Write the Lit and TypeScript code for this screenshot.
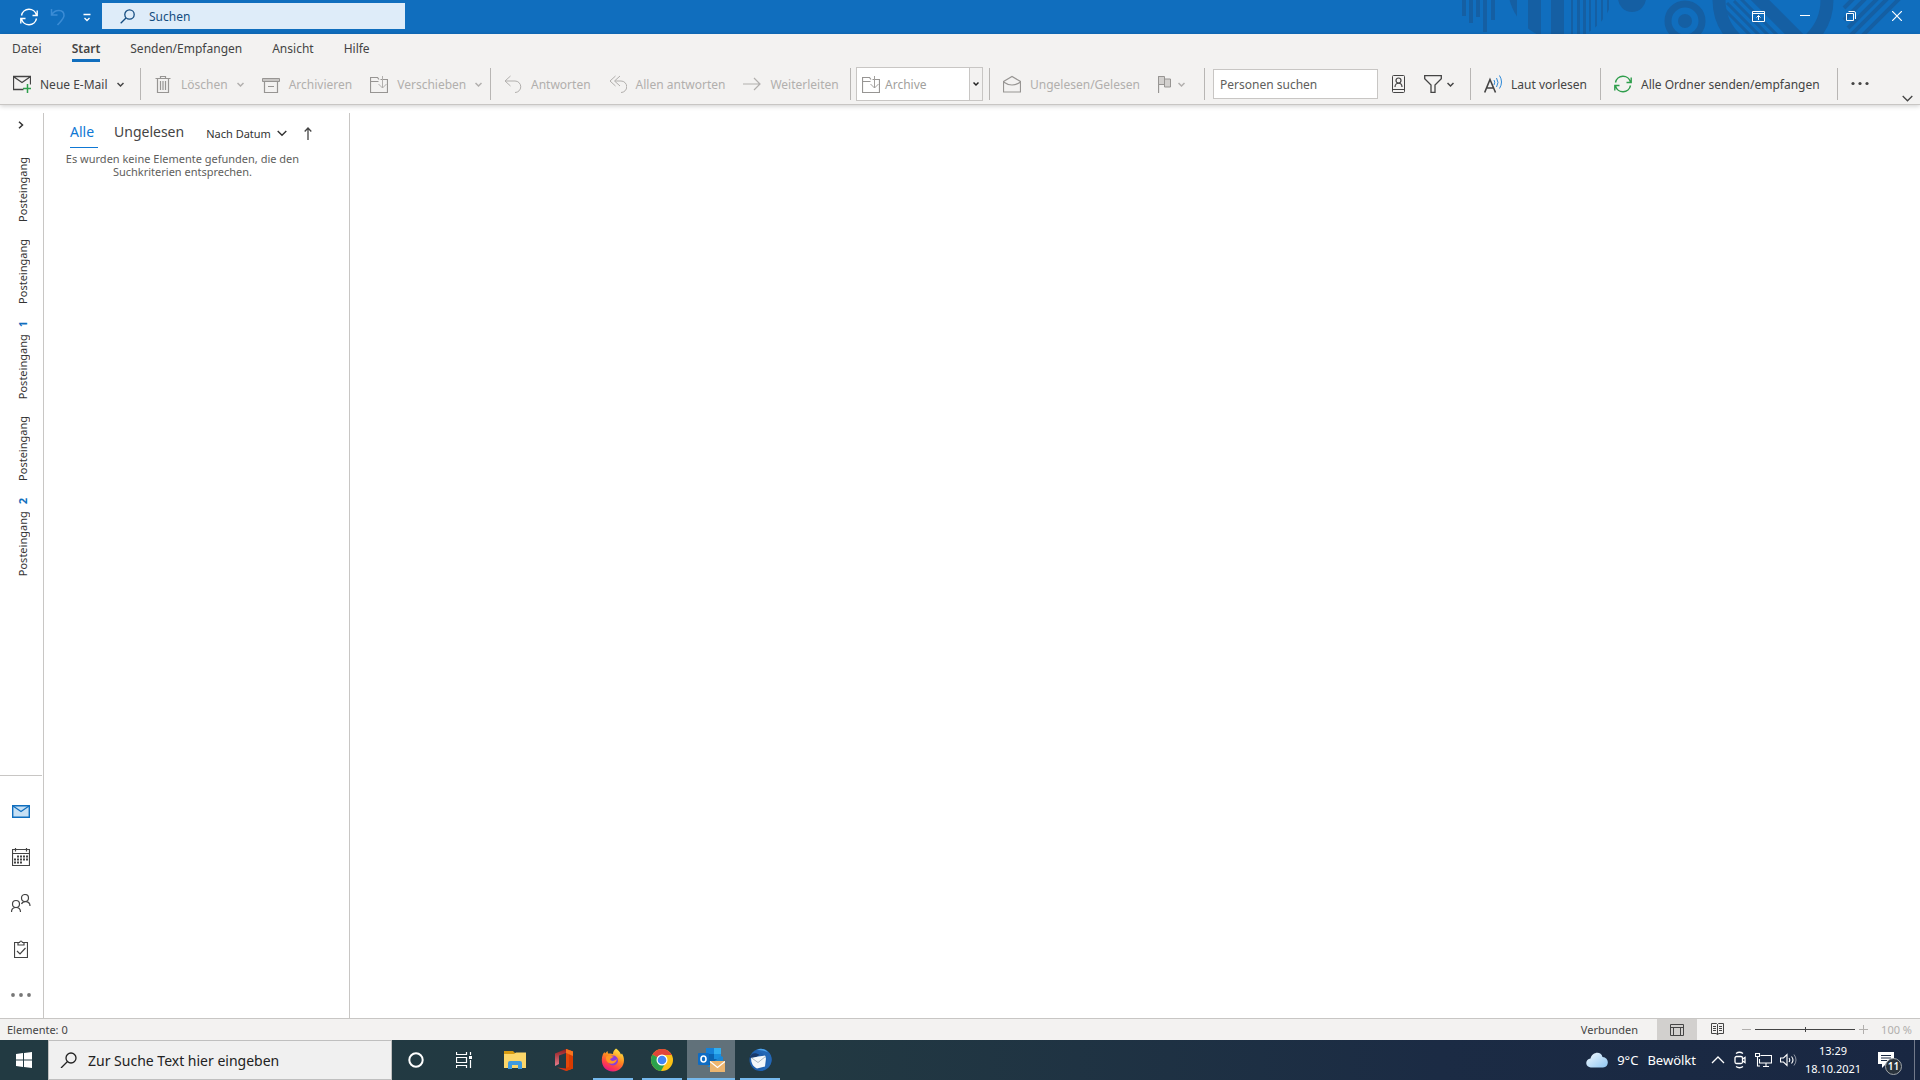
import { LitElement, html, css, svg, nothing, TemplateResult } from "lit";
import { customElement } from "lit/decorators.js";

type Art = ReturnType<typeof svg>;

const icon = (w: number, h: number, body: Art, cls = "") => html`<svg
  class="icon ${cls}" width=${w} height=${h} viewBox="0 0 ${w} ${h}" fill="none"
  stroke="currentColor" stroke-width="1" aria-hidden="true">${body}</svg>`;

const caret = () => icon(7, 18, svg`<path d="M0.5 8l3 3 3-3" stroke-width="1.5"/>`);

const syncArt = svg`<path d="M1.5 7.5A7.7 7.7 0 0 1 16.5 7M16.5 10.500A7.700 7.700 0 0 1 1.500 11M17.200 2.500V7.500H12.500M.8 15.500V10.500H5.500" stroke-width="1.400"/>`;
const art = {
  undo: svg`<path d="M1.500 1v6h6M2 6.500C5 1 14 1 14 7.500c0 3-2.500 5-6.500 9.500" stroke-width="1.500"/>`,
  lens: svg`<circle cx="9.500" cy="5.500" r="4.700" stroke-width="1.300"/><path d="M6 9L.7 14.300" stroke-width="1.300"/>`,
  newMail: svg`<path d="M10.500 14.500H.5v-13h17v8M1 2l8 5.500L17 2" stroke-width="1.300"/><path d="M14.500 9v9M10 13.500h9" stroke="#2fa04d" stroke-width="1.500"/>`,
  trash: svg`<path d="M1.500 3.500h15M3.500 3.500v14h11v-14M6.500 3V1.500h5V3M6.500 6v9M9 6v9M11.500 6v9" stroke-width="1.200" stroke="#979593"/>`,
  archive: svg`<g stroke="#979593"><path d="M.5 3.500h17v3H.5z" fill="#c8c6c4"/><path d="M2.500 6.500v11h13v-11M6 11.500h6" stroke-width="1.200"/></g>`,
  move: svg`<path d="M10.500 4.500H17.500V17.500H.5V2.500H7.500L9 4.500M.5 6.500H8.500" stroke="#979593" stroke-width="1.200"/><path d="M12.500 1V13M8.500 9l4 4 4-4"/>`,
  reply: svg`<path d="M6.500 1L1 6l5.500 5M1 6h10a5.500 5.500 0 0 1 0 11.500"/>`,
  replyAll: svg`<path d="M6.500 1L1 6l5.500 5M11 1L5.500 6l5.500 5M6 6h6a5.500 5.500 0 0 1 0 11.500"/>`,
  forward: svg`<path d="M0 9h17M11 3l6 6-6 6" stroke-width="1.200"/>`,
  openMail: svg`<path d="M.5 6.500L9 1.500l8.500 5v10.500H.5zM.5 7q8.500 6 17 0" stroke-width="1.200" stroke="#979593"/>`,
  flag: svg`<g stroke="#979593"><path d="M.5 1v17" stroke-width="1.300"/><path d="M.5 1.500h6v8h-6zM6.500 4h6v8h-6z" fill="#d2d0ce"/></g>`,
  contact: svg`<rect x=".5" y=".5" width="12" height="17" rx="1"/><path d="M.5 14.500h12M3 12c0-5 7-5 7 0" stroke-width="1.200"/><circle cx="6.500" cy="5.500" r="2.500" stroke-width="1.200"/>`,
  filter: svg`<path d="M.7.700h16.600v3L11 10v7.500H7V10L.7 3.700z" stroke-width="1.300"/>`,
  readAloud: svg`<path d="M.7 17.500L6 4.500l5.500 13M2.500 13h7" stroke-width="1.600"/><g stroke="#2b88d8"><path d="M10 5q1.500 2 0 5M12.500 3q3 4.500 0 9M15.500.500q4 6.500 0 13"/></g>`,
  sync: syncArt,
};

interface Command { label: string; art: Art; disabled?: boolean; menu?: boolean; }

const editing: Command[] = [
  { label: "Löschen", art: art.trash, disabled: true, menu: true },
  { label: "Archivieren", art: art.archive, disabled: true },
  { label: "Verschieben", art: art.move, disabled: true, menu: true },
];
const replying: Command[] = [
  { label: "Antworten", art: art.reply, disabled: true },
  { label: "Allen antworten", art: art.replyAll, disabled: true },
  { label: "Weiterleiten", art: art.forward, disabled: true },
];

@customElement("title-bar")
class TitleBar extends LitElement {
  static styles = css`
    :host { display: flex; height: 34px; background: #106ebe; color: #fff; position: relative; }
    .backdrop { position: absolute; right: 0; top: 0; }
    .quick { display: flex; align-items: center; width: 102px; box-sizing: border-box; padding-left: 20px; gap: 12px; }
    button { border: 0; background: none; color: inherit; padding: 0; display: flex; align-items: center; justify-content: center; }
    .dim { color: #3b8cd5; }
    .search { display: flex; align-items: center; gap: 14px; width: 303px; height: 26px; margin-top: 3px; padding-left: 18px; box-sizing: border-box; background: #deecf9; color: #144c80; }
    input { border: 0; background: none; outline: 0; font: 12px "Noto Sans", "Open Sans", sans-serif; color: inherit; padding: 0; flex: 1; min-width: 0; }
    input::placeholder { color: #144c80; opacity: 1; }
    .window { margin-left: auto; display: flex; position: relative; }
    .window button { width: 46px; height: 32px; }
  `;
  render() {
    return html`
      <svg class="backdrop" width="480" height="34" viewBox="0 0 480 34" fill="#155fa3" aria-hidden="true">
        <defs>
          <clipPath id="disc"><circle cx="121" cy="-13" r="53"/></clipPath>
          <clipPath id="hole"><circle cx="333" cy="0" r="48"/></clipPath>
        </defs>
        <path d="M22 0h4v16h-4zM29 0h4v23h-4zM36 0h4v17h-4zM43 0h4v32h-4zM51 0h4v20h-4z"/>
        <g clip-path="url(#disc)"><path d="M68 0h9v34h-9zM88 0h13v34H88zM111 0h13v34h-13zM131 0h2v34h-2zM137 0h3v34h-3zM143 0h3v34h-3zM149 0h2v34h-2zM155 0h2v34h-2zM161 0h2v34h-2zM167 0h2v34h-2z"/></g>
        <circle cx="192" cy="-2" r="14"/>
        <circle cx="245" cy="21" r="17" fill="none" stroke="#155fa3" stroke-width="7"/><circle cx="245" cy="21" r="7"/>
        <circle cx="333" cy="0" r="54" fill="none" stroke="#155fa3" stroke-width="13"/>
        <g clip-path="url(#hole)" stroke="#155fa3" stroke-width="3"><path d="M280 5l40 40M287 3l40 40M294 1l40 40M301-1l40 40"/><path d="M310-10l50 50" stroke-width="13"/></g>
        <g stroke="#155fa3" stroke-width="4"><path d="M404 8l20-20M404 20l34-34M408 28l40-40M401 45l60-60M413 45l60-60"/></g>
      </svg>
      <div class="quick">
        <button aria-label="Senden/Empfangen">${icon(18, 18, syncArt)}</button>
        <button class="dim" aria-label="Rückgängig">${icon(16, 18, art.undo)}</button>
        <button aria-label="Anpassen">${icon(18, 18, svg`<path d="M5.500 6.500h7M6.500 10L9 12.500l2.500-2.500" stroke-width="1.300"/>`)}</button>
      </div>
      <label class="search">${icon(15, 15, art.lens)}<input type="search" aria-label="Suchen" placeholder="Suchen"></label>
      <div class="window">
        <button aria-label="Menüband">${icon(14, 11, svg`<path d="M.5.500h12v10H.5zM.5 2.500h12M6.500 9V4.500M4.500 6.500l2-2 2 2"/>`)}</button>
        <button aria-label="Minimieren">${icon(10, 10, svg`<path d="M0 4.500h10"/>`)}</button>
        <button aria-label="Verkleinern">${icon(10, 10, svg`<path d="M.5 2.500h7v7h-7zM2.500.500H8q1.500 0 1.500 1.500v6"/>`)}</button>
        <button aria-label="Schließen">${icon(10, 10, svg`<path d="M0 0l10 10M10 0L0 10" stroke-width="1.200"/>`)}</button>
      </div>`;
  }
}

@customElement("command-ribbon")
class CommandRibbon extends LitElement {
  static styles = css`
    :host { display: block; background: #f3f2f1; border-bottom: 1px solid #c8c6c4; box-shadow: 0 1px 5px rgba(0,0,0,.2); position: relative; color: #444; }
    button { border: 0; background: none; font: inherit; color: inherit; padding: 0; display: flex; align-items: center; gap: 9px; white-space: nowrap; }
    nav { display: flex; height: 32px; padding: 0 0 0 12px; gap: 30px; box-sizing: border-box; }
    nav a { color: inherit; text-decoration: none; border-bottom: 3px solid transparent; height: 25px; line-height: 30px; }
    nav .active { font-weight: 600; border-bottom-color: #106ebe; }
    .tools { display: grid; grid-template-columns: 141px 350px 360px 139px 215px 266px 130px 237px 1fr; height: 38px; }
    .group { display: flex; align-items: center; height: 32px; gap: 18px; padding-left: 13px; margin-top: 2px; border-right: 1px solid #b8b6b4; box-sizing: border-box; min-width: 0; }
    .group.last { border: 0; }
    button:disabled { color: #b1afad; }
    .group.tight { padding-left: 5px; }
    .combo { display: flex; align-items: center; width: 127px; height: 34px; border: 1px solid #c8c6c4; background: #fff; box-sizing: border-box; color: #a19f9d; gap: 5px; padding-left: 5px; }
    .combo span { flex: 1; }
    .combo button { width: 13px; height: 32px; border-left: 1px solid #c8c6c4; background: #f3f2f1; justify-content: center; color: #222; }
    .group.people { padding-left: 8px; gap: 14px; }
    .people input { width: 165px; height: 30px; border: 1px solid #c8c6c4; box-sizing: border-box; padding: 0 6px; font: inherit; color: #605e5c; background: #fff; }
    .people input::placeholder { color: #605e5c; opacity: 1; }
    .people button, .compact { gap: 5px; }
    .sync { color: #2f9e4c; }
    .collapse { margin-left: auto; margin-right: 7px; margin-top: 28px; }
  `;
  private command(c: Command) {
    return html`<button ?disabled=${c.disabled}>${icon(18, 18, c.art)}<span>${c.label}</span>${c.menu ? caret() : nothing}</button>`;
  }
  render() {
    return html`
      <nav>
        <a href="#">Datei</a><a href="#" class="active">Start</a><a href="#">Senden/Empfangen</a><a href="#">Ansicht</a><a href="#">Hilfe</a>
      </nav>
      <div class="tools">
        <div class="group">${this.command({ label: "Neue E-Mail", art: art.newMail, menu: true })}</div>
        <div class="group">${editing.map((c) => this.command(c))}</div>
        <div class="group">${replying.map((c) => this.command(c))}</div>
        <div class="group tight"><div class="combo">${icon(18, 18, art.move)}<span>Archive</span><button aria-label="Ordner wählen">${icon(6, 6, svg`<path d="M.5 1.500l2.500 2.500 2.500-2.500" stroke-width="1.500"/>`)}</button></div></div>
        <div class="group">${this.command({ label: "Ungelesen/Gelesen", art: art.openMail, disabled: true })}
          <button class="compact" disabled aria-label="Kennzeichnung">${icon(15, 18, art.flag)}${caret()}</button></div>
        <div class="group people"><input type="text" aria-label="Personen suchen" placeholder="Personen suchen">
          <button aria-label="Adressbuch">${icon(18, 18, art.contact)}</button>
          <button aria-label="E-Mail filtern">${icon(18, 18, art.filter)}${caret()}</button></div>
        <div class="group">${this.command({ label: "Laut vorlesen", art: art.readAloud })}</div>
        <div class="group"><button>${icon(18, 18, art.sync, "sync")}<span>Alle Ordner senden/empfangen</span></button></div>
        <div class="group last"><button aria-label="Weitere Befehle">${icon(18, 18, svg`<g fill="currentColor" stroke="none"><circle cx="2" cy="8.500" r="1.600"/><circle cx="9" cy="8.500" r="1.600"/><circle cx="16" cy="8.500" r="1.600"/></g>`)}</button>
          <button class="collapse" aria-label="Menüband reduzieren">${icon(11, 7, svg`<path d="M.7 1l4.800 4.800L10.300 1" stroke-width="1.300"/>`)}</button></div>
      </div>`;
  }
}

@customElement("folder-rail")
class FolderRail extends LitElement {
  static styles = css`
    :host { display: flex; flex-direction: column; align-items: center; width: 43px; border-right: 1px solid #c8c6c4; margin-top: 8px; color: #333; }
    button, a { border: 0; background: none; font: inherit; color: inherit; padding: 0; text-decoration: none; display: flex; align-items: center; justify-content: center; }
    .expand { width: 41px; height: 24px; margin-right: 2px; }
    .folders { display: flex; flex-direction: column; align-items: center; gap: 17px; padding: 20px 0 0 2px; flex: 1; font-size: 11px; }
    .folders a { writing-mode: vertical-rl; transform: rotate(180deg); gap: 7px; line-height: 16px; }
    b { color: #106ebe; }
    .modules { display: flex; flex-direction: column; width: 42px; margin-right: 1px; border-top: 1px solid #c8c6c4; padding-top: 12px; color: #444; }
    .modules a { height: 46px; }
    .modules .mail { color: #106ebe; }
  `;
  render() {
    const unread = [0, 0, 1, 0, 2];
    return html`
      <button class="expand" aria-label="Ordnerbereich erweitern">${icon(6, 8, svg`<path d="M1 .700l3.500 3.300L1 7.300" stroke-width="1.500"/>`)}</button>
      <div class="folders">${unread.map((n) => html`<a href="#"><span>Posteingang</span>${n ? html`<b>${n}</b>` : nothing}</a>`)}</div>
      <div class="modules">
        <a href="#" class="mail" aria-label="E-Mail">${icon(18, 13, svg`<path d="M.7.700h16.600v11.600H.7z" fill="#c7e0f4" stroke-width="1.400"/><path d="M1 1l8 5.500L17 1" stroke-width="1.200"/>`)}</a>
        <a href="#" aria-label="Kalender">${icon(18, 18, svg`<path d="M.5 1.500h17v16H.5zM.5 5.500h17M3.500 0v3.500M14.500 0v3.500" stroke-width="1.200"/><path d="M5 8.500h11M2 11.500h14M2 14.500h8" stroke-width="2" stroke-dasharray="2 1"/>`)}</a>
        <a href="#" aria-label="Personen">${icon(20, 18, svg`<circle cx="14" cy="4" r="3.500" stroke-width="1.200"/><circle cx="5" cy="10" r="3.500" stroke-width="1.200"/><path d="M.5 18c0-6 9-6 9 0M10.500 10c1.500-3.500 8.500-3.500 8.500 2" stroke-width="1.200"/>`)}</a>
        <a href="#" aria-label="Aufgaben">${icon(14, 18, svg`<path d="M4 2.500H.5v15h13v-15H10M4 5V2.500h1.500q1.500-3 3 0H10V5zM3 11l3 3 5.500-6" stroke-width="1.200"/>`)}</a>
        <a href="#" aria-label="Weitere">${icon(20, 4, svg`<g fill="#777" stroke="none"><circle cx="2" cy="2" r="1.900"/><circle cx="10" cy="2" r="1.900"/><circle cx="18" cy="2" r="1.900"/></g>`)}</a>
      </div>`;
  }
}

@customElement("message-list")
class MessageList extends LitElement {
  static styles = css`
    :host { display: block; width: 305px; border-right: 1px solid #c8c6c4; margin-top: 8px; color: #444; font-size: 11px; }
    .head { display: flex; align-items: flex-start; padding: 6px 0 0 26px; height: 30px; font-size: 14px; }
    button { border: 0; background: none; font: inherit; color: inherit; padding: 0; line-height: 24px; height: 29px; }
    .tab { height: 29px; padding-bottom: 3px; }
    .all { color: #0f78d4; border-bottom: 1px solid #0f78d4; margin-right: 16px; width: 28px; text-align: left; }
    .sort { display: flex; align-items: center; font-size: 11px; gap: 6px; margin-left: 22px; color: #333; }
    .order { margin-left: 17px; display: flex; align-items: center; }
    p { margin: 3px 44px 0 16px; text-align: center; line-height: 13px; color: #605e5c; }
  `;
  render() {
    return html`
      <div class="head">
        <button class="tab all">Alle</button><button class="tab">Ungelesen</button>
        <button class="sort">Nach Datum ${icon(10, 7, svg`<path d="M.7 1l4.300 4.300L9.300 1" stroke-width="1.400"/>`)}</button>
        <button class="order" aria-label="Sortierung umkehren">${icon(8, 13, svg`<path d="M4 13V1M.7 4.500L4 1l3.300 3.500" stroke-width="1.300"/>`)}</button>
      </div>
      <p>Es wurden keine Elemente gefunden, die den<br>Suchkriterien entsprechen.</p>`;
  }
}

@customElement("status-bar")
class StatusBar extends LitElement {
  static styles = css`
    :host { display: flex; align-items: center; height: 21px; background: #f3f2f1; border-top: 1px solid #c8c6c4; font-size: 11px; color: #444; padding: 0 8px 0 7px; }
    .state { margin-left: auto; margin-right: 19px; }
    button { border: 0; background: none; width: 40px; height: 21px; color: inherit; padding: 0; display: flex; align-items: center; justify-content: center; }
    .on { background: #d2d0ce; }
    .zoom { display: flex; align-items: center; gap: 4px; margin: 0 13px 0 5px; color: #b1afad; }
    .zoom button { width: 9px; }
    input { appearance: none; width: 100px; height: 9px; margin: 0; background: linear-gradient(#444, #444) center / 100% 1px no-repeat; }
    input::-webkit-slider-thumb { appearance: none; width: 1px; height: 5px; background: #444; }
    .percent { color: #b1afad; }
  `;
  render() {
    return html`<span>Elemente: 0</span><span class="state">Verbunden</span>
      <button class="on" aria-label="Normal">${icon(14, 12, svg`<path d="M.5.500h13v11H.5zM.5 3.500h13M3.500 3.500v8M10.500 3.500v8"/>`)}</button>
      <button aria-label="Lesen">${icon(13, 13, svg`<path d="M6.500 1.500L5.500.500h-5v10h5l1 1.500 1-1.500h5V.500h-5zM6.500 1.500v10M2 3.500h3M2 5.500h3M2 7.500h3M8 3.500h3M8 5.500h3M8 7.500h3"/>`)}</button>
      <div class="zoom"><button aria-label="Verkleinern">${icon(9, 9, svg`<path d="M0 4.500h9"/>`)}</button>
      <input type="range" aria-label="Zoom" min="0" max="200" value="100">
      <button aria-label="Vergrößern">${icon(9, 9, svg`<path d="M0 4.500h9M4.500 0v9"/>`)}</button></div>
      <span class="percent">100 %</span>`;
  }
}

const apps: { name: string; state: string; art: TemplateResult }[] = [
  { name: "Explorer", state: "", art: html`<svg width="24" height="24" viewBox="0 0 24 24"><path d="M1 3h9l2 2h11v4H1z" fill="#d79b12"/><path d="M1 6h10l2-1.500h10V20H1z" fill="#fcd669"/><path d="M5 21v-6q0-2 2-2h10q2 0 2 2v6h-4v-4H9v4z" fill="#3f9ae0"/></svg>` },
  { name: "Office", state: "", art: html`<svg width="24" height="24" viewBox="0 0 24 24"><defs><linearGradient id="of" x1="0" y1="0" x2="0" y2="1"><stop offset="0" stop-color="#8e1a1c"/><stop offset="1" stop-color="#e67c8c"/></linearGradient></defs><path d="M14 1L3 5.500V18l4-2V7.500L14 5z" fill="url(#of)"/><path d="M14 1l7 2.500v17L14 23z" fill="#e3480a"/><path d="M14 1v4l3 1v13l-3 1v3l7-2.500v-17z" fill="#d83b01"/><path d="M14 1l7 2.500V8l-7-3z" fill="#f6741f"/><path d="M5 19.500l9 1V23z" fill="#d4361c"/></svg>` },
  { name: "Firefox", state: "open", art: html`<svg width="24" height="24" viewBox="0 0 24 24"><defs><linearGradient id="fx" x1=".8" y1="0" x2=".3" y2="1"><stop offset="0" stop-color="#fff04a"/><stop offset=".45" stop-color="#ff8a1e"/><stop offset=".75" stop-color="#ff3f4b"/><stop offset="1" stop-color="#e31587"/></linearGradient></defs><path d="M15 .500c4 3 4 4 5 6l1-1c5 8 0 18-9 18S-1.500 15 2 6l1.500-2 .5 1.500L6.500 3l.5 2.500c2 0 3-.5 5 .5C12 3.500 13 2 15 .500z" fill="url(#fx)"/><circle cx="12" cy="12.500" r="5" fill="#8a3ddb"/><path d="M5 9c3-3 6-1 8 0-2 0-2 1.500-4 2 1 3 5 2 7 0-1 7-12 6-11-2z" fill="#ff9722"/></svg>` },
  { name: "Chrome", state: "open", art: html`<svg width="24" height="24" viewBox="0 0 24 24"><circle cx="12" cy="12" r="11" fill="#fbc116"/><path d="M12 12L2.500 6.500A11 11 0 0 1 21.500 6.500L21.800 7H12z" fill="#e0453a"/><path d="M12 12L2.500 6.500A11 11 0 0 0 11 23l5-9z" fill="#2ba24c"/><circle cx="12" cy="12" r="5.500" fill="#fff"/><circle cx="12" cy="12" r="4.300" fill="#4285f4"/></svg>` },
  { name: "Outlook", state: "active", art: html`<svg width="28" height="26" viewBox="0 0 28 26"><path d="M9 1h15v17H9z" fill="#0a63b2"/><path d="M9 1h8v6H9z" fill="#1580d8"/><path d="M17 1h7v6h-7z" fill="#31aef0"/><path d="M17 7h7v5h-7z" fill="#1a8fe0"/><path d="M24 9l2 1v10H10z" fill="#1b87d4"/><rect x="1" y="6" width="11" height="12" rx="1" fill="#0f6cc4"/><ellipse cx="6.500" cy="12" rx="2.500" ry="3" fill="none" stroke="#fff" stroke-width="1.600"/><path d="M13 14h15v11H13z" fill="#ecb56f"/><path d="M13 14.500l7.500 6 7.500-6" fill="none" stroke="#fff" stroke-width="1.200"/></svg>` },
  { name: "Thunderbird", state: "open", art: html`<svg width="24" height="24" viewBox="0 0 24 24"><circle cx="12.500" cy="12" r="11" fill="#1f5fae"/><path d="M8 2c7-4 17 2 15.500 11-1 7-8 10-13 9.500C19 20 21 12 16 7c-2-2-5-4-8-5z" fill="#2467b5"/><path d="M9 1.500c5-2 9 0 11 3-3-2-6-2-11-3z" fill="#4ea3ea"/><path d="M3 9.500l7-1 7-1 1 3-1 8-8 2c-4-2-6-5-6-11z" fill="#f4f7fa"/><path d="M3 9.500l7 5 7.500-6" fill="none" stroke="#a9b7c4"/><path d="M1.500 10c1-5 6-6 10-3L8 9z" fill="#17386b"/></svg>` },
];

@customElement("task-bar")
class TaskBar extends LitElement {
  static styles = css`
    :host { display: flex; height: 40px; background: linear-gradient(90deg, #223a42 0%, #223942 42%, #1b2b44 75%, #192742 100%); color: #fff; font-size: 13px; }
    button { border: 0; background: none; color: inherit; font: inherit; padding: 0; display: flex; align-items: center; justify-content: center; box-sizing: border-box; }
    .square { width: 48px; }
    .search { display: flex; align-items: center; gap: 11px; width: 344px; box-sizing: border-box; border: 1px solid #bfbfbf; background: #f0f0f0; color: #222; padding-left: 11px; }
    input { flex: 1; min-width: 0; border: 0; outline: 0; background: none; padding: 0; font: 14px "Noto Sans", "Open Sans", sans-serif; }
    input::placeholder { color: #222; opacity: 1; }
    .apps { display: flex; gap: 1px; margin-left: 3px; }
    .app { width: 48px; position: relative; }
    .active { background: #61717a; border-bottom: 2px solid #76b9ed; padding-top: 2px; }
    .open::after { content: ""; position: absolute; left: 4px; right: 4px; bottom: 0; height: 2px; background: #76b9ed; }
    .tray { margin-left: auto; display: flex; align-items: center; gap: 8px; }
    .weather { gap: 9px; margin-right: 7px; }
    .clock { flex-direction: column; font-size: 11px; line-height: 18px; width: 56px; }
    .notes { position: relative; width: 24px; margin: 0 4px 0 9px; }
    .badge { position: absolute; left: 7px; top: 10px; width: 17px; height: 17px; box-sizing: border-box; border: 1px solid #a0a5ab; border-radius: 9px; background: #29323c; font-size: 10px; line-height: 15px; text-align: center; font-weight: 600; }
    .desktop { width: 5px; border-left: 1px solid #72798a; height: 40px; }
  `;
  render() {
    return html`
      <button class="square" aria-label="Start"><svg width="16" height="16" viewBox="0 0 16 16" fill="#fff"><path d="M0 2l7-1v6.500H0zM8 .900L16 0v7.500H8zM0 8.500h7V15l-7-1zM8 8.500h8V16l-8-.9z"/></svg></button>
      <label class="search">${icon(17, 16, svg`<circle cx="11" cy="6" r="5" stroke-width="1.300"/><path d="M7.500 9.500L1 16" stroke-width="1.300"/>`)}<input type="search" aria-label="Suche" placeholder="Zur Suche Text hier eingeben"></label>
      <button class="square" aria-label="Cortana">${icon(16, 16, svg`<circle cx="8" cy="8" r="6.700" stroke-width="2"/>`)}</button>
      <button class="square" aria-label="Aufgabenansicht">${icon(16, 16, svg`<path d="M.5 0v2.500h10V0M.5 5.500h10v5H.5zM.5 16v-2.500h10V16M14.500 0v3M14.500 8v8" stroke-width="1.200"/><path d="M13 5.500h3" stroke-width="3"/>`)}</button>
      <div class="apps">${apps.map((a) => html`<button class="app ${a.state}" aria-label=${a.name}>${a.art}</button>`)}</div>
      <div class="tray">
        <button class="weather"><svg width="22" height="16" viewBox="0 0 22 16"><defs><linearGradient id="cl" x1="0" y1="0" x2="1" y2="1"><stop offset="0" stop-color="#f3f9fe"/><stop offset="1" stop-color="#8ec6f2"/></linearGradient></defs><path d="M5 15.500a4.500 4.500 0 0 1-.5-9C6 0 15-1.500 16.500 5c7 .5 7 10 .5 10.500z" fill="url(#cl)"/></svg><span>9°C</span><span>Bewölkt</span></button>
        <button aria-label="Ausgeblendete Symbole">${icon(14, 8, svg`<path d="M1 7l6-6 6 6" stroke-width="1.300"/>`)}</button>
        <button aria-label="Besprechung">${icon(14, 18, svg`<rect x="2" y="5.500" width="7.500" height="7" rx="1.500" stroke-width="1.300"/><path d="M9.500 8l2.500-1.500v5L9.500 10M3 2.500q3.500-2.500 7 0M3 15.500q3.500 2.500 7 0" stroke-width="1.300"/>`)}</button>
        <button aria-label="Netzwerk">${icon(17, 14, svg`<path d="M5.500 2.500h11v7.500h-12V6M8 13.500h6M11 10v3.500M.5.500h4v3h-4zM2.500 3.500V13H5" stroke-width="1.100"/>`)}</button>
        <button aria-label="Lautstärke">${icon(17, 14, svg`<path d="M.5 5h3L7 1.500v11L3.500 9h-3zM9 5q1.500 2 0 4M11.500 3.500q3 3.500 0 7" stroke-width="1.100"/><path d="M14 1.500q4 5.500 0 11" opacity=".5"/>`)}</button>
        <button class="clock"><span>13:29</span><span>18.10.2021</span></button>
        <button class="notes" aria-label="Benachrichtigungen"><svg width="24" height="24" viewBox="0 0 24 24"><path d="M0 4h16v12H8l-4 4v-4H0z" fill="#fff"/><path d="M3 7.500h10M3 10h10M3 12.500h6" stroke="#1a2943"/></svg><span class="badge">11</span></button>
        <div class="desktop"></div>
      </div>`;
  }
}

@customElement("app-root")
class AppRoot extends LitElement {
  static styles = css`
    :host { display: flex; flex-direction: column; min-height: 100vh; background: #fff; font: 12px "Noto Sans", "Open Sans", sans-serif; }
    main { display: flex; flex: 1; }
    .reading { flex: 1; }
  `;
  render() {
    return html`<title-bar></title-bar><command-ribbon></command-ribbon>
      <main><folder-rail></folder-rail><message-list></message-list><section class="reading" aria-label="Lesebereich"></section></main>
      <status-bar></status-bar><task-bar></task-bar>`;
  }
}
